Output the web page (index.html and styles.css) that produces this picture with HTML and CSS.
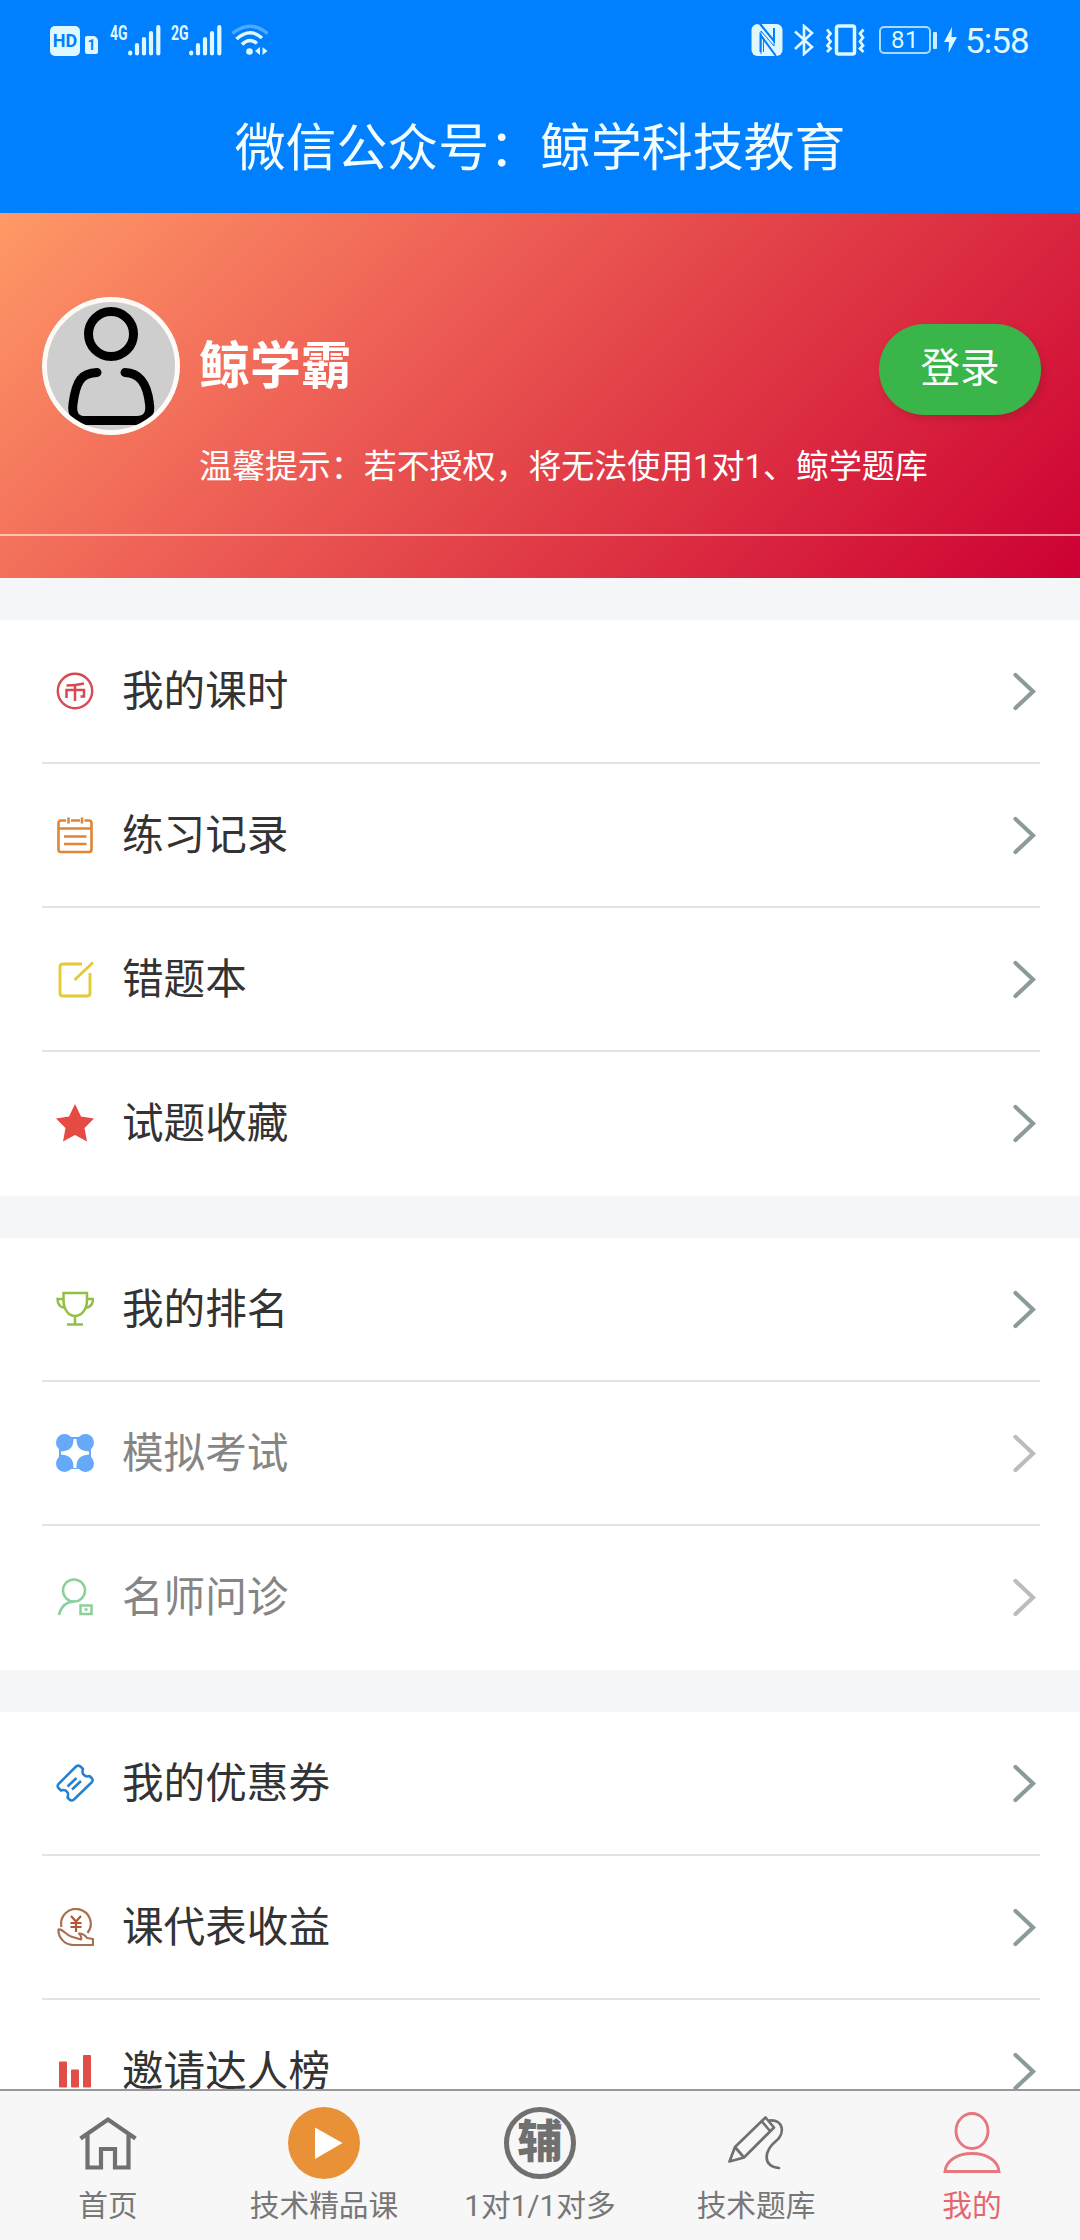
FILE: index.html
```html
<!DOCTYPE html>
<html lang="zh-CN">
<head>
<meta charset="utf-8">
<title>我的</title>
<link rel="stylesheet" href="styles.css">
</head>
<body>
<svg class="defs" width="0" height="0">
  <symbol id="chevron" viewBox="0 0 26 40"><path d="M4.500 4 L22 20.500 L4.500 37" fill="none" stroke="currentColor" stroke-width="4.200" stroke-linecap="round"/></symbol>
  <symbol id="signal" viewBox="0 0 33 31"><path d="M2.200 27.500v1M9 20v8.500M16 14v14.500M23 8v20.500M30.300 2.200v26.300" stroke="currentColor" stroke-width="4.200" stroke-linecap="round"/></symbol>
</svg>
<div class="app">
  <header class="top">
    <div class="status">
      <div class="status-left">
        <span class="hd">HD</span>
        <span class="sim">1</span>
        <span class="net">4G</span>
        <svg class="bars" width="33" height="31"><use href="#signal"/></svg>
        <span class="net net-second">2G</span>
        <svg class="bars" width="33" height="31"><use href="#signal"/></svg>
        <svg class="wifi" width="38" height="32" viewBox="0 0 38 32" fill="none" stroke="#dff7ff" stroke-width="3.500">
          <path d="M1.500 9.500Q19 -5 36.500 9.500" opacity=".35"/>
          <path d="M5.500 15Q19 3 31 14"/>
          <path d="M11 20.500Q18.500 13 26 19.500"/>
          <circle cx="18.500" cy="27.500" r="3.300" fill="#dff7ff" stroke="none"/>
          <path d="M29 23v8l-5-4zM31.500 23v8l5-4z" fill="#dff7ff" stroke="none"/>
        </svg>
      </div>
      <div class="status-right">
        <svg width="32" height="32" viewBox="0 0 32 32"><rect x=".5" width="31" height="32" rx="6" fill="#dff7ff"/><path d="M9 0 23 17V4M9.500 28V11L25 32" fill="none" stroke="#007fff" stroke-width="2"/><path d="M7 0 10 0 23 18V22L10 7V30M9.500 11.500 12.500 14V28" fill="none" stroke="#007fff" stroke-width="1"/></svg>
        <svg class="bt" width="22" height="32" viewBox="0 0 22 32"><path d="M2 7.500 19 23 11 30V2l8 7L2 25" fill="none" stroke="#dff7ff" stroke-width="2.600"/></svg>
        <svg class="vib" width="40" height="32" viewBox="0 0 40 32" fill="none" stroke="#dff7ff" stroke-width="3.500"><rect x="11.500" y="2" width="18" height="28" rx="2"/><path d="M2 5.500l3.500 4-3 4 3 4-3 4 3 3-3.500 3.500M38.500 5.500l-3.500 4 3 4-3 4 3 4-3 3 3.500 3.500" stroke-width="2.800"/></svg>
        <span class="battery">81</span><span class="battery-cap"></span>
        <svg class="bolt" width="13" height="26" viewBox="0 0 13 26"><path d="M8 0 0 15h5L4.500 26 13 10H7.500z" fill="#dff7ff"/></svg>
        <span class="time">5:58</span>
      </div>
    </div>
    <h1 class="title">微信公众号：鲸学科技教育</h1>
  </header>

  <section class="profile">
    <div class="profile-main">
      <div class="avatar">
        <svg width="138" height="138" viewBox="0 0 138 138" fill="none" stroke="#000" stroke-width="9" stroke-linecap="round"><circle cx="69" cy="37" r="22.500"/><path d="M55 75.500C40 76 34 83 31 107C29.500 118 34 123.500 43 123.500H95C104 123.500 109 118 107.500 107C105 85 97 76 83 75.500"/></svg>
      </div>
      <div class="who">
        <div class="name">鲸学霸</div>
        <div class="hint">温馨提示：若不授权，将无法使用1对1、鲸学题库</div>
      </div>
      <button class="login">登录</button>
    </div>
  </section>

  <main class="menu">
    <ul class="group">
      <li class="row">
        <svg class="icon" viewBox="0 0 38 38" fill="none" stroke="#d84a52" stroke-width="2.400"><circle cx="19" cy="19" r="17.200"/><path d="M28 11.500Q20 13.500 10.500 13.500M10.500 26V18H28V24.500H24.500M19 13V29" stroke-width="2.500"/></svg>
        <span class="label">我的课时</span><svg class="arrow"><use href="#chevron"/></svg>
      </li>
      <li class="row">
        <svg class="icon" viewBox="0 0 38 38" fill="none" stroke="#e08436" stroke-width="2.600"><path d="M10 4.500H5Q2.500 4.500 2.500 7V33.500Q2.500 36 5 36H33Q35.500 36 35.500 33.500V7Q35.500 4.500 33 4.500H28.500M15 4.500H24M2.500 12.500H35.500M8 20.500H30.500M8 28H30.500M12.500 1.500V7.500M26 1.500V7.500"/></svg>
        <span class="label">练习记录</span><svg class="arrow"><use href="#chevron"/></svg>
      </li>
      <li class="row">
        <svg class="icon" viewBox="0 0 38 38" fill="none" stroke="#e4ca35" stroke-width="2.900"><path d="M26 4H7Q4 4 4 7V33Q4 36 7 36H31Q34 36 34 33V13M37 2.500 18.500 20"/></svg>
        <span class="label">错题本</span><svg class="arrow"><use href="#chevron"/></svg>
      </li>
      <li class="row">
        <svg class="icon" viewBox="0 0 38 38" fill="#e54b43"><path d="M19 0 25 12.500 38 14.500 28.500 24 31 37.500 19 31 7 37.500 9.500 24 0 14.500 13 12.500z"/></svg>
        <span class="label">试题收藏</span><svg class="arrow"><use href="#chevron"/></svg>
      </li>
    </ul>
    <ul class="group">
      <li class="row">
        <svg class="icon" viewBox="0 0 38 38" fill="none" stroke="#94bf45" stroke-width="2.500"><path d="M7.500 3H31V10C31 20 25 26 19 26S7.500 20 7.500 10ZM7.500 9H1.500C1.500 15 4 17.500 9.500 18M31 9H37C37 15 34 17.500 29 18M19 26V34.500M11 34.500H27"/></svg>
        <span class="label">我的排名</span><svg class="arrow"><use href="#chevron"/></svg>
      </li>
      <li class="row muted">
        <svg class="icon" viewBox="0 0 38 38"><g fill="#65a9f8"><rect x="3" y="3" width="32" height="32"/><circle cx="8.500" cy="8.500" r="8.500"/><circle cx="29.500" cy="8.500" r="8.500"/><circle cx="8.500" cy="29.500" r="8.500"/><circle cx="29.500" cy="29.500" r="8.500"/></g><path d="M17.500 5H20.500C20.500 12 23 17 33 17.500V20.500C23 21 20.500 26 20.500 34H17.500C17.500 26 15 21 5 20.500V17.500C15 17 17.500 12 17.500 5Z" fill="#fff"/></svg>
        <span class="label">模拟考试</span><svg class="arrow"><use href="#chevron"/></svg>
      </li>
      <li class="row muted">
        <svg class="icon" viewBox="0 0 38 38" fill="none" stroke="#8bcf9a" stroke-width="2.500"><circle cx="18" cy="12.500" r="11"/><path d="M3 37C5 27.500 10 24 18 23.500"/><rect x="24.500" y="27.500" width="11" height="8.500"/><path d="M28.500 31.500h3"/></svg>
        <span class="label">名师问诊</span><svg class="arrow"><use href="#chevron"/></svg>
      </li>
    </ul>
    <ul class="group">
      <li class="row">
        <svg class="icon" viewBox="0 0 38 38" fill="none" stroke="#2380d2" stroke-width="2.500" stroke-linejoin="round"><path d="M20 2.500Q22.500.5 25 3L27 5C25 10 29 13.500 33.500 12L36 14.500Q37.500 16.500 35.500 18.500L18 35.500Q15.500 37.500 13.500 35.500L11.500 33.500C13.500 28.500 10 25 5 26.500L2.500 24Q.5 21.500 3 19.500ZM11.500 22.500 20.500 14M16 25.500 25 17"/></svg>
        <span class="label">我的优惠券</span><svg class="arrow"><use href="#chevron"/></svg>
      </li>
      <li class="row">
        <svg class="icon" viewBox="0 0 38 38" fill="none" stroke="#a9704f" stroke-width="2.200" stroke-linejoin="round"><path d="M5.500 19A14.800 14.800 0 1 1 31.500 25M2.500 21.500C6 20 10 27 15 28.500L25 31.500Q26 28 23 25.500Q28 25.500 31 30L37 31V37H17C8 36.500 2 29 2.500 21.500Z"/><path d="M15 8 20 13.500 25 8M20 13.500V24M14.500 15H25.500M14.500 19H25.500" stroke="#b35631"/></svg>
        <span class="label">课代表收益</span><svg class="arrow"><use href="#chevron"/></svg>
      </li>
      <li class="row">
        <svg class="icon" viewBox="0 0 38 38" fill="#e04e47"><rect x="3" y="9.500" width="8" height="26" rx="1"/><rect x="15" y="17.500" width="8" height="18" rx="1"/><rect x="27" y="3" width="8" height="32.500" rx="1"/></svg>
        <span class="label">邀请达人榜</span><svg class="arrow"><use href="#chevron"/></svg>
      </li>
    </ul>
  </main>

  <nav class="tabs">
    <a class="tab">
      <svg class="tab-icon" viewBox="0 0 72 72" fill="none" stroke="#707070" stroke-width="4.200"><path d="M8.500 31.500 36 12.500 63.500 31.500M15.500 27V60.500H29V42H43V60.500H56.500V27"/></svg>
      <span>首页</span>
    </a>
    <a class="tab">
      <svg class="tab-icon" viewBox="0 0 72 72"><circle cx="36" cy="36" r="36" fill="#e99137"/><path d="M27 20.500V52L54.500 36z" fill="#fff"/></svg>
      <span>技术精品课</span>
    </a>
    <a class="tab">
      <span class="tab-icon coach">辅</span>
      <span>1对1/1对多</span>
    </a>
    <a class="tab">
      <svg class="tab-icon" viewBox="0 0 72 72" fill="none" stroke="#707070" stroke-width="2.700" stroke-linejoin="round" stroke-linecap="round"><path d="M45.500 10.500 15 40 9.500 54.500 24 50.500 54 20.500ZM15 40 24 50.500M42 14.500 50 24M49.500 13.500C64 12 65 27 56 34C44 44 42 59 59 61"/></svg>
      <span>技术题库</span>
    </a>
    <a class="tab active">
      <svg class="tab-icon" viewBox="0 0 72 72" fill="none" stroke="#e8767d" stroke-width="2.900"><ellipse cx="36" cy="24" rx="16" ry="17.500"/><path d="M9 64.500C10 53 22 46.500 36 46.500S62 53 63 64.500Z"/></svg>
      <span>我的</span>
    </a>
  </nav>
</div>
</body>
</html>
```
FILE: styles.css
```css
* { box-sizing: border-box; }
body { margin: 0; font-family: Roboto, "Noto Sans CJK SC", sans-serif; background: #f4f5f7; }
.defs { position: absolute; }
.app { width: 1080px; height: 2240px; display: flex; flex-direction: column; overflow: hidden; }

.top { height: 213px; flex: none; background: #007fff; color: #f2fdff; }
.status { height: 80px; padding: 0 51px 0 50px; display: flex; justify-content: space-between; align-items: center; color: #dff7ff; }
.status-left, .status-right { display: flex; align-items: center; }
.hd { width: 30px; height: 30px; margin-top: 2px; border-radius: 5px; background: #dff7ff; color: #007fff; font: 700 18px/30px Roboto, sans-serif; text-align: center; }
.sim { width: 13px; height: 18px; margin: 9px 12px 0 5px; border-radius: 2px 5px 2px 2px; background: #dff7ff; color: #007fff; font: 700 14px/18px Roboto, sans-serif; text-align: center; }
.net { width: 18px; height: 31px; font: 700 20px/17px Roboto, sans-serif; transform: scaleX(.7); transform-origin: left; }
.net-second { margin-left: 10px; }
.wifi { margin-left: 9px; }
.bt { margin-left: 10px; }
.vib { margin-left: 10px; }
.battery { width: 52px; height: 28px; margin-left: 14px; border: 2px solid #a8dcff; border-radius: 5px; font-size: 24px; line-height: 24px; text-align: center; letter-spacing: .5px; }
.battery-cap { width: 4px; height: 17px; margin-left: 2px; border-radius: 1px; background: #c8efff; }
.bolt { margin-left: 7px; }
.time { margin-left: 8px; width: 64px; font-size: 35px; line-height: 40px; margin-top: 3px; white-space: nowrap; letter-spacing: -.9px; }
.title { margin: 0; height: 133px; padding-top: 3px; font-size: 50.900px; font-weight: 400; line-height: 132px; text-align: center; white-space: nowrap; }

.profile { height: 365px; flex: none; padding-top: 84px; background: linear-gradient(135deg, #ff9966 0%, #cc0033 100%); background: linear-gradient(135deg, #ff9966 0%, #ef6357 33%, #e24148 56%, #d71d3c 80%, #cc0033 100%); color: #fff; }
.profile-main { height: 239px; padding: 0 39px 0 42px; display: flex; align-items: flex-start; border-bottom: 2px solid rgba(255, 235, 225, .65); }
.avatar { width: 138px; height: 138px; flex: none; border-radius: 50%; background: #cecece; overflow: hidden; display: grid; }
.avatar::after { content: ""; grid-area: 1 / 1; border: 5px solid #fffaf5; border-radius: 50%; z-index: 1; }
.avatar svg { grid-area: 1 / 1; }
.who { width: 679px; padding-left: 19px; flex: 1; white-space: nowrap; }
.name { height: 100px; padding-top: 33px; font-size: 50.900px; line-height: 74px; font-weight: 700; }
.hint { height: 60px; margin-top: 40px; font-size: 32.950px; line-height: 60px; }
.login { width: 162px; height: 91px; margin-top: 27px; flex: none; padding: 0 0 2px; border: 0; border-radius: 46px; background: #39b54a; color: #fff; font: 39.500px/86px Roboto, "Noto Sans CJK SC", sans-serif; box-shadow: 3px 4px 6px rgba(100, 30, 30, .25); }

.menu { height: 1511px; flex: none; overflow: hidden; padding-top: 42px; display: flex; flex-direction: column; gap: 42px; background: #f4f6f7; }
.group { list-style: none; margin: 0; padding: 0 40px 0 42px; background: #fff; flex: none; }
.row { height: 144px; padding: 0 3px 0 14px; display: flex; align-items: center; border-bottom: 2px solid #e4e4e4; color: #333; }
.row:last-child { border-bottom-color: transparent; }
.icon { width: 38px; height: 38px; flex: none; }
.label { margin-left: 28px; padding-top: 1px; flex: 1; font-size: 41.600px; line-height: 60px; }
.arrow { width: 26px; height: 40px; color: #8d9a9c; }
.muted .label { color: #858585; }
.muted .arrow { color: #bbbdbd; }

.tabs { height: 151px; flex: none; display: grid; grid-template-columns: repeat(5, 1fr); background: #f7f7f8; border-top: 2px solid #98989a; color: #777; }
.tab { display: flex; flex-direction: column; align-items: center; padding-top: 16px; font-size: 29.700px; line-height: 44px; white-space: nowrap; gap: 5px; }
.tab-icon { width: 72px; height: 72px; flex: none; }
.coach { border: 5px solid #707070; border-radius: 50%; color: #707070; font-size: 45px; font-weight: 900; line-height: 61px; text-align: center; }
.active { color: #e5666e; }
```
